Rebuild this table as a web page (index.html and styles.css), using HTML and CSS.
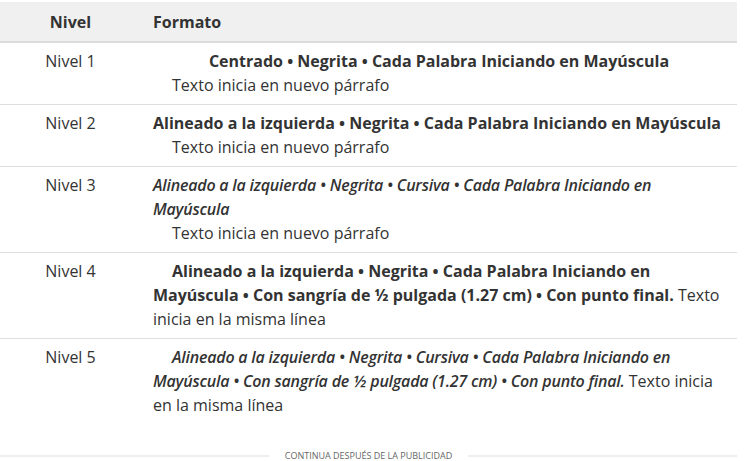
FILE: index.html
```html
<!DOCTYPE html>
<html lang="es">
<head>
<meta charset="utf-8">
<link rel="stylesheet" href="styles.css">
</head>
<body>
<table class="levels">
  <thead>
    <tr><th class="col-level">Nivel</th><th class="col-format">Formato</th></tr>
  </thead>
  <tbody>
    <tr>
      <td class="col-level">Nivel 1</td>
      <td class="col-format">
        <div class="centered"><strong>Centrado • Negrita • Cada Palabra Iniciando en Mayúscula</strong></div>
        <div class="indent">Texto inicia en nuevo párrafo</div>
      </td>
    </tr>
    <tr>
      <td class="col-level">Nivel 2</td>
      <td class="col-format">
        <div><strong>Alineado a la izquierda • Negrita • Cada Palabra Iniciando en Mayúscula</strong></div>
        <div class="indent">Texto inicia en nuevo párrafo</div>
      </td>
    </tr>
    <tr>
      <td class="col-level">Nivel 3</td>
      <td class="col-format">
        <div><strong class="bi">Alineado a la izquierda • Negrita • Cursiva • Cada Palabra Iniciando en Mayúscula</strong></div>
        <div class="indent">Texto inicia en nuevo párrafo</div>
      </td>
    </tr>
    <tr>
      <td class="col-level">Nivel 4</td>
      <td class="col-format">
        <div class="first-indent"><strong>Alineado a la izquierda • Negrita • Cada Palabra Iniciando en Mayúscula • Con sangría de ½ pulgada (1.27 cm) • Con punto final.</strong> Texto inicia en la misma línea</div>
      </td>
    </tr>
    <tr class="last">
      <td class="col-level">Nivel 5</td>
      <td class="col-format">
        <div class="first-indent"><strong class="bi">Alineado a la izquierda • Negrita • Cursiva • Cada Palabra Iniciando en Mayúscula • Con sangría de ½ pulgada (1.27 cm) • Con punto final.</strong> Texto inicia en la misma línea</div>
      </td>
    </tr>
  </tbody>
</table>
<div class="ad-sep">
  <span class="ad-line"></span>
  <span class="ad-label">CONTINUA DESPUÉS DE LA PUBLICIDAD</span>
  <span class="ad-line"></span>
</div>
</body>
</html>
```

FILE: styles.css
```css
html, body {
  margin: 0;
  padding: 0;
  background: #fff;
}
body {
  font-family: "Open Sans", "Liberation Sans", sans-serif;
  font-size: 16px;
  color: #333;
  padding-top: 2px;
}
.levels {
  width: 737px;
  border-collapse: collapse;
  line-height: 24px;
}
.levels thead th {
  background: #f0f0f0;
  border-bottom: 2px solid #dcdcdc;
  height: 39px;
  padding: 0 12px;
  font-weight: 700;
  text-align: left;
  vertical-align: middle;
}
.levels th.col-level,
.levels td.col-level {
  width: 117px;
  text-align: center;
}
.levels td {
  vertical-align: top;
  padding: 6px 12px 7px;
  border-bottom: 1px solid #dedede;
}
.levels tr.last td {
  border-bottom: none;
}
.bi {
  font-style: italic;
  font-weight: 600;
  letter-spacing: -0.21px;
}
.centered {
  text-align: center;
}
.indent {
  padding-left: 19px;
}
.first-indent {
  text-indent: 19px;
}
.ad-sep {
  display: flex;
  align-items: center;
  width: 737px;
  margin-top: 26px;
  gap: 16px;
}
.ad-line {
  flex: 1;
  height: 2px;
  background: #eeeeee;
}
.ad-label {
  font-size: 9px;
  color: #666;
  line-height: 12px;
}
```
